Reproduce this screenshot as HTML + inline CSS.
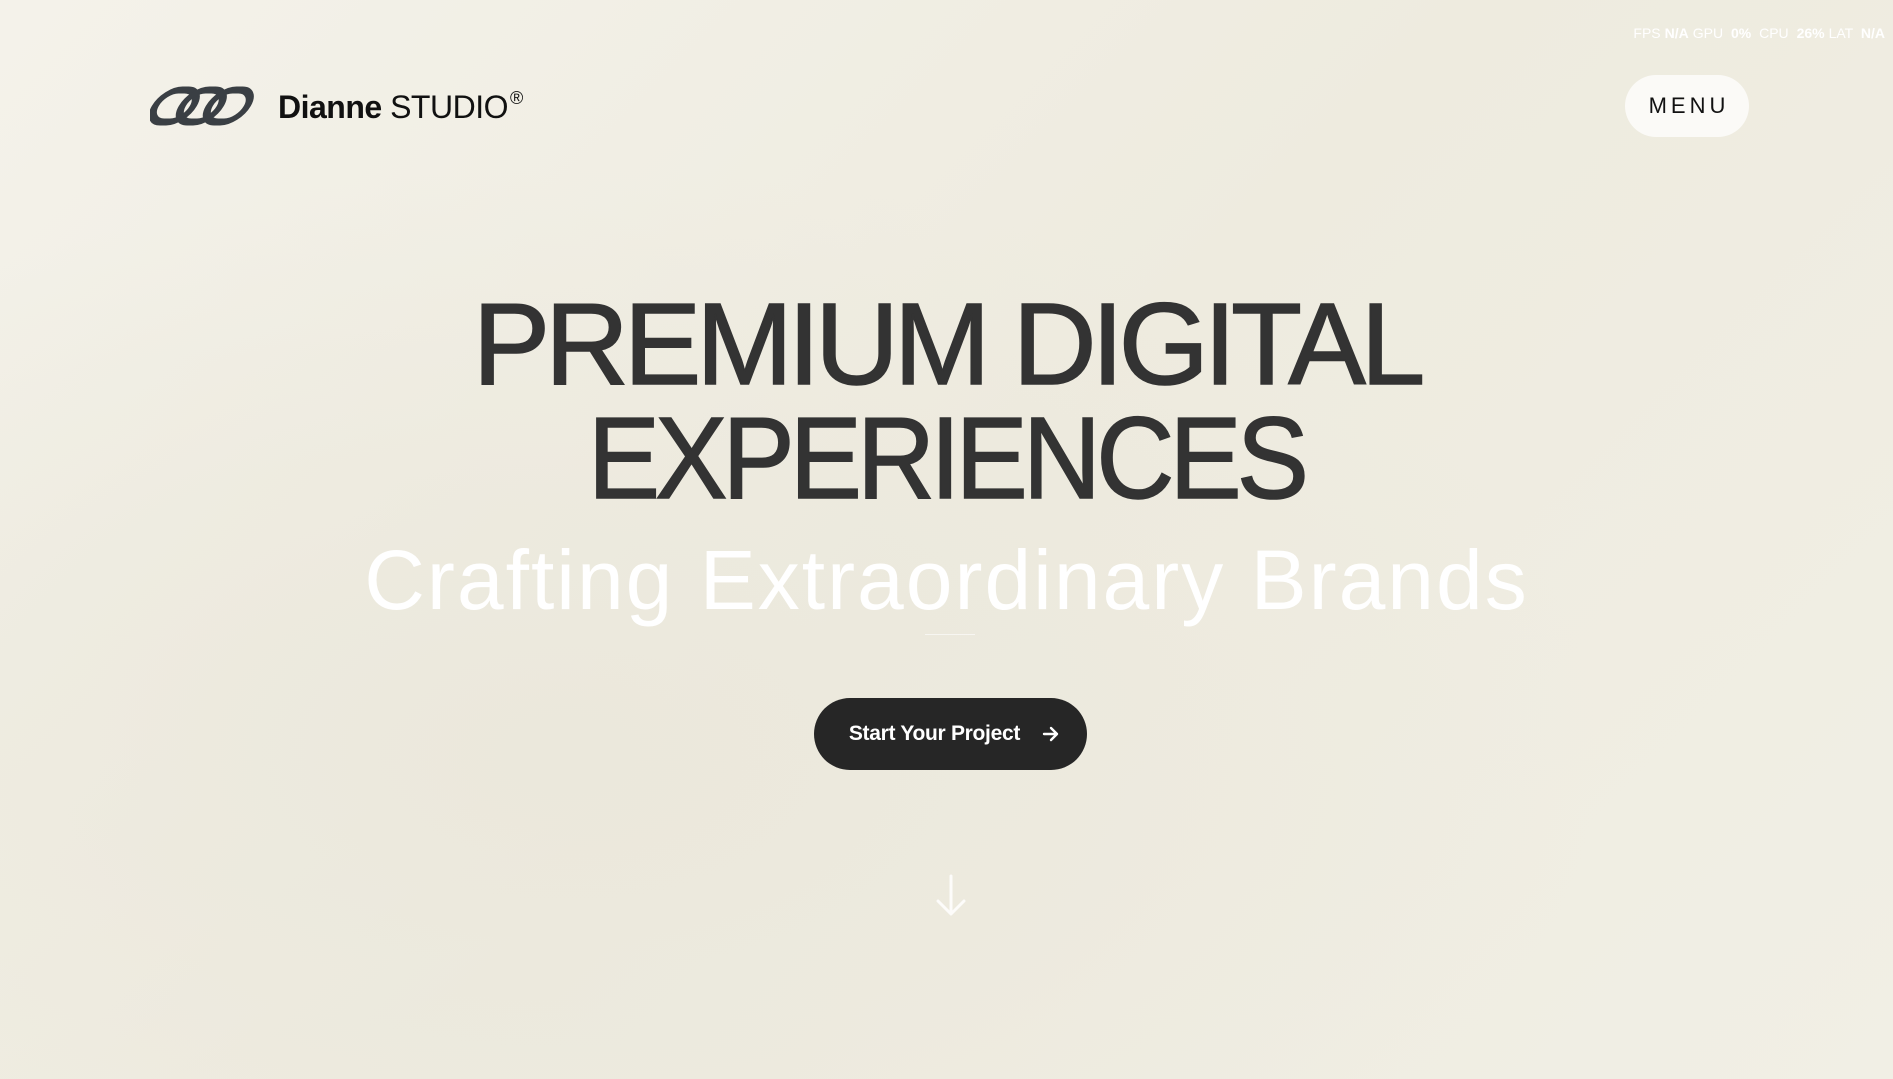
<!DOCTYPE html>
<html><head><meta charset="utf-8"><style>
*{margin:0;padding:0;box-sizing:border-box}
body{width:1893px;height:1079px;overflow:hidden;font-family:"Liberation Sans",sans-serif;
background:radial-gradient(ellipse at 30% 70%,#ebe8dc 0%,rgba(235,232,220,0) 55%),linear-gradient(135deg,#f4f2ea 0%,#eeebdf 50%,#f1efe5 100%);position:relative}
.stats{position:absolute;right:4px;top:25px;font-size:14px;color:#fff;white-space:nowrap}
.stats b{font-weight:bold;margin:0 4px}
.logo{position:absolute;left:150px;top:84px}
.brand{position:absolute;left:278px;top:88px;font-size:32px;color:#111;letter-spacing:-0.5px;white-space:nowrap}
.brand b{font-weight:bold}
.brand sup{font-size:18px;vertical-align:14px;margin-left:2px}
.menu{position:absolute;left:1625px;top:75px;width:124px;height:62px;border-radius:31px;background:#fbfaf7;font-size:22px;letter-spacing:4px;color:#111;display:flex;align-items:center;justify-content:center;padding-left:4px}
h1{position:absolute;left:0;width:1893px;text-align:center;font-size:116px;line-height:114px;color:#333;font-weight:normal;letter-spacing:-5px;top:287px;-webkit-text-stroke:1.6px #333}
h1 span{display:inline-block;transform:scaleX(0.93)}
.sub{position:absolute;left:0;width:1893px;text-align:center;top:530px;font-size:84px;color:#fff;letter-spacing:2px;line-height:100px}
.line{position:absolute;left:925px;top:634px;width:50px;height:1px;background:#fff;opacity:.6}
.btn{position:absolute;left:814px;top:698px;width:273px;height:72px;border-radius:36px;background:#262626;color:#fff;font-size:21px;font-weight:bold;display:flex;align-items:center;justify-content:center;letter-spacing:-0.3px;padding-left:8px}
.arrow{position:absolute;left:933px;top:874px}
</style></head><body>
<div class="stats">FPS<b>N/A</b>GPU <b>0%</b> CPU <b>26%</b>LAT <b>N/A</b></div>
<svg class="logo" width="104" height="44" viewBox="0 0 104 44">
<g fill="none" stroke="#3a3f44" stroke-width="7" transform="skewX(-30) translate(13 0)">
<rect x="5" y="6" width="38" height="32" rx="16"/>
<rect x="32" y="6" width="38" height="32" rx="16"/>
<rect x="59" y="6" width="38" height="32" rx="16"/>
</g></svg>
<div class="brand"><b>Dianne</b> STUDIO<sup>®</sup></div>
<div class="menu">MENU</div>
<h1>PREMIUM DIGITAL<br><span>EXPERIENCES</span></h1>
<div class="sub">Crafting Extraordinary Brands</div>
<div class="line"></div>
<div class="btn">Start Your Project&nbsp;&nbsp;&nbsp;&nbsp;<svg width="18" height="16" viewBox="0 0 18 16"><path d="M2 8H15M9 2l6 6-6 6" fill="none" stroke="#fff" stroke-width="2.4" stroke-linecap="round" stroke-linejoin="round"/></svg></div>
<svg class="arrow" width="36" height="44" viewBox="0 0 36 44"><path d="M18 2V40M5 27l13 13 13-13" fill="none" stroke="#fff" stroke-width="3" stroke-linecap="round" stroke-linejoin="round" opacity=".85"/></svg>
</body></html>
